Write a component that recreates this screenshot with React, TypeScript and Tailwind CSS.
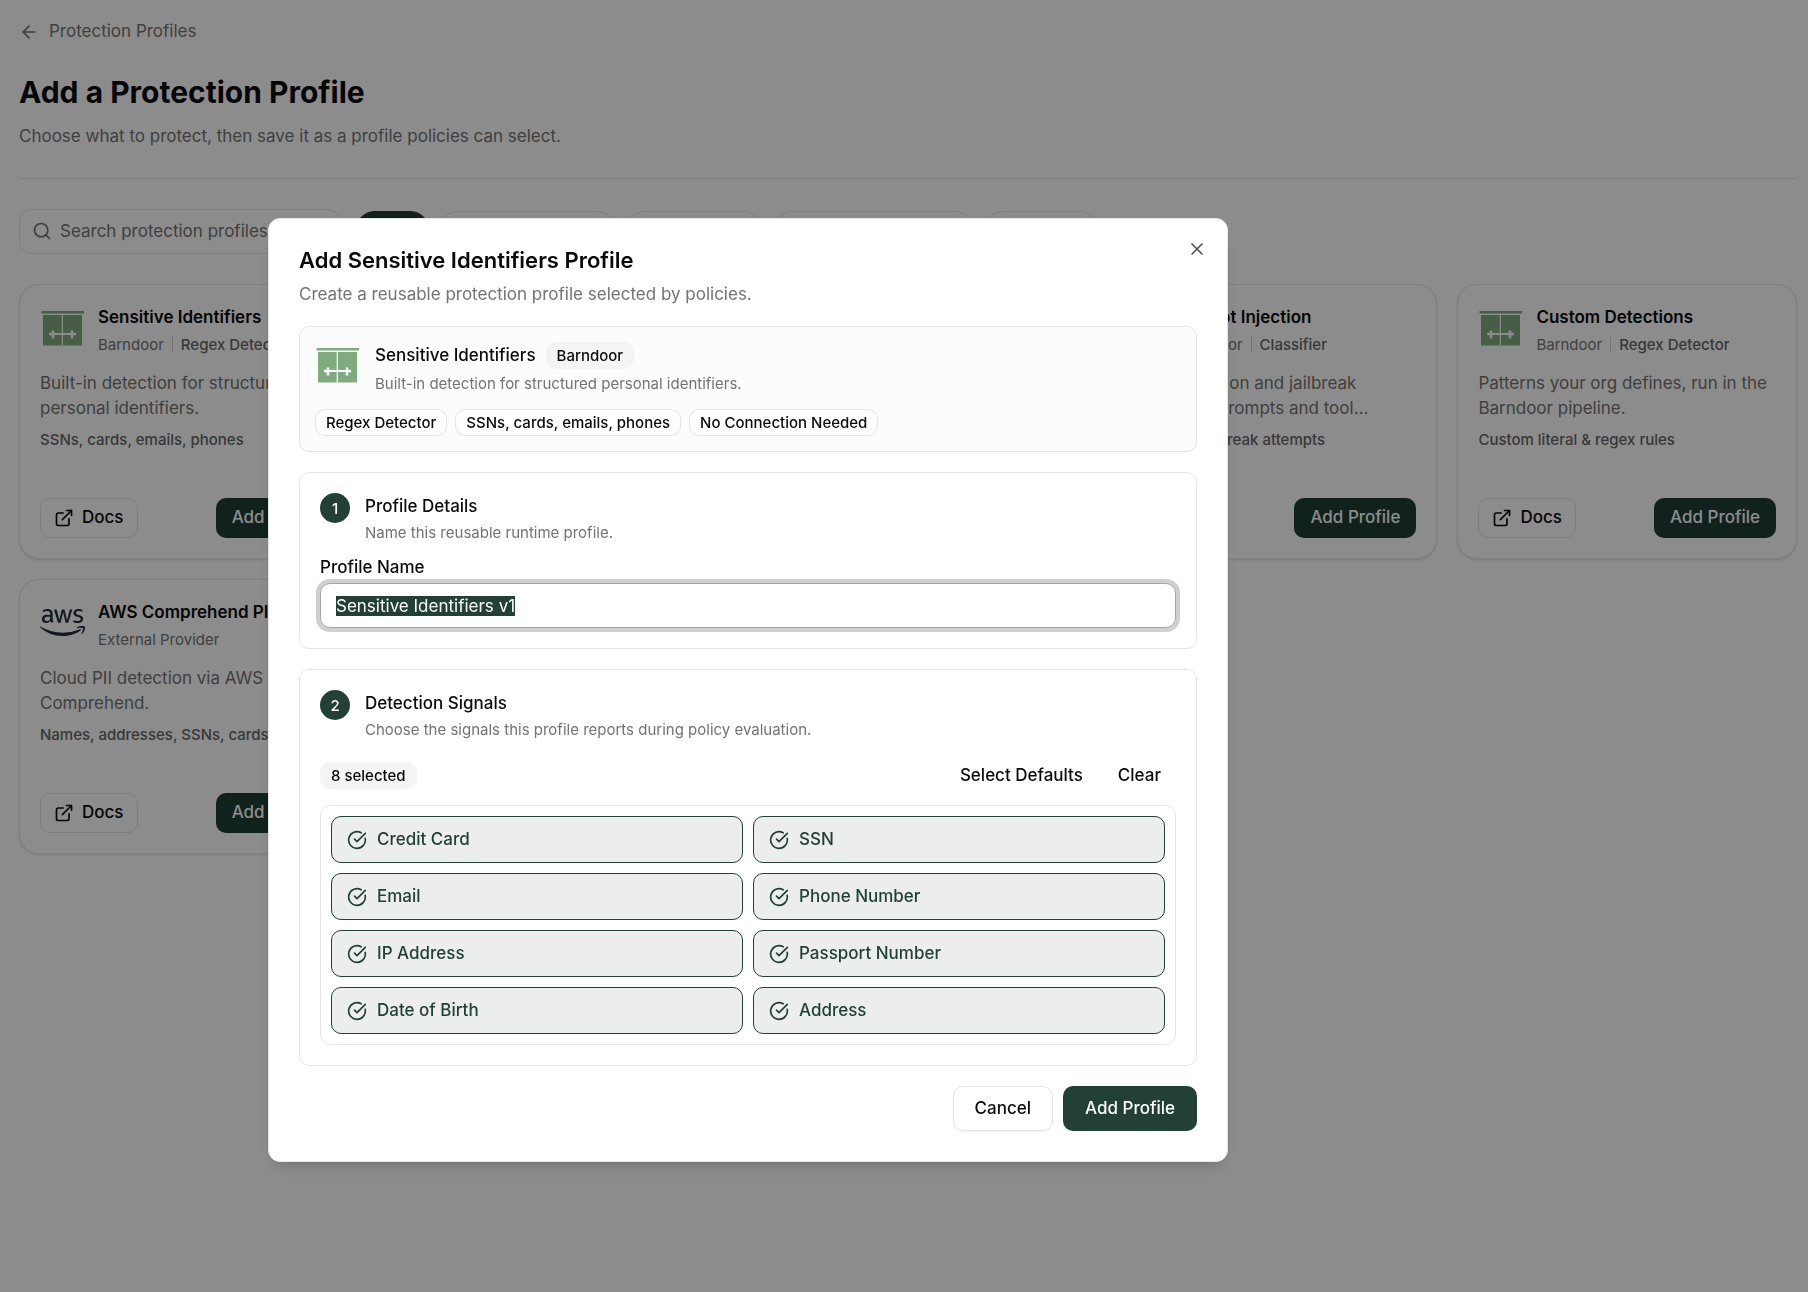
import { ArrowLeft, CircleCheckBig, ExternalLink, Search, X } from 'lucide-react';
import { FaAws } from 'react-icons/fa';

const filters = ['All', 'Regex Detector', 'Classifiers', 'External Providers', 'Custom'];

const signals = [
    'Credit Card', 'SSN',
    'Email', 'Phone Number',
    'IP Address', 'Passport Number',
    'Date of Birth', 'Address',
];

const profiles = [
    {
        title: 'Sensitive Identifiers',
        vendor: 'Barndoor',
        kind: 'Regex Detector',
        desc: 'Built-in detection for structured personal identifiers.',
        covers: 'SSNs, cards, emails, phones',
    },
    {
        title: 'Secrets',
        vendor: 'Barndoor',
        kind: 'Regex Detector',
        desc: 'Finds keys and tokens in prompts and tool calls.',
        covers: 'API keys, tokens',
    },
    {
        title: 'Toxicity',
        vendor: 'Barndoor',
        kind: 'Classifier',
        desc: 'Flags harmful language in prompts.',
        covers: 'Hate, harassment',
    },
    {
        title: 'Prompt Injection',
        vendor: 'Barndoor',
        kind: 'Classifier',
        desc: 'Prompt injection and jailbreak detection in prompts and tool responses.',
        covers: 'Injection & jailbreak attempts',
    },
    {
        title: 'Custom Detections',
        vendor: 'Barndoor',
        kind: 'Regex Detector',
        desc: 'Patterns your org defines, run in the Barndoor pipeline.',
        covers: 'Custom literal & regex rules',
    },
    {
        title: 'AWS Comprehend PII',
        vendor: 'External Provider',
        desc: 'Cloud PII detection via AWS Comprehend.',
        covers: 'Names, addresses, SSNs, cards',
    },
];

export default function App() {
    return (
        <div className="min-h-screen bg-white font-['Inter',sans-serif] text-[17px] leading-[25px] text-[#0a0a0a]">
            <main className="pt-[19px] pr-[11px] pl-[19px]">
                <a href="#profiles" className="inline-flex items-center gap-[10px] text-[#737373]">
                    <ArrowLeft size={20} />
                    Protection Profiles
                </a>
                <h1 className="mt-6 text-[30px] leading-[38px] font-bold">Add a Protection Profile</h1>
                <p className="mt-[13px] text-[#737373]">Choose what to protect, then save it as a profile policies can select.</p>

                <div className="mt-[29px] flex items-center gap-[15px] border-t border-[#e5e5e5] pt-[30px]">
                    <label className="flex h-[45px] w-[321px] items-center gap-2 rounded-xl border border-[#e5e5e5] px-3 text-[#737373]">
                        <Search size={20} className="shrink-0" />
                        <input
                            type="search"
                            aria-label="Search protection profiles"
                            placeholder="Search protection profiles..."
                            className="w-full min-w-0 bg-transparent outline-none placeholder:text-[#737373]"
                        />
                    </label>
                    <div className="flex gap-2">
                        {filters.map((name, i) => (
                            <button
                                key={name}
                                className={`h-10 rounded-full border px-[26px] font-medium ${i === 0 ? 'border-[#1f3d33] bg-[#1f3d33] text-white' : 'border-[#e5e5e5]'}`}
                            >
                                {name}
                            </button>
                        ))}
                    </div>
                </div>

                <div className="mt-[30px] grid grid-cols-5 gap-5">
                    {profiles.map((profile) => (
                        <ProfileCard key={profile.title} {...profile} />
                    ))}
                </div>
            </main>

            <div className="fixed inset-0 flex items-start bg-black/45 pt-[218px] pl-[268px]">
                <AddProfileDialog />
            </div>
        </div>
    );
}

const AddProfileDialog = () => (
    <div role="dialog" aria-labelledby="dialog-title" className="relative w-full max-w-[960px] rounded-xl border border-[#e5e5e5] bg-white px-[30px] pt-[29px] pb-[30px] shadow-lg">
        <button aria-label="Close" className="absolute top-5 right-5 text-[#525252]">
            <X size={20} />
        </button>

        <h2 id="dialog-title" className="text-[22px] leading-[25px] font-semibold">Add Sensitive Identifiers Profile</h2>
        <p className="mt-[9px] text-[#737373]">Create a reusable protection profile selected by policies.</p>

        <div className="mt-[19px] rounded-[10px] border border-[#e5e5e5] bg-[#fcfcfc] p-[15px]">
            <div className="flex gap-[15px]">
                <BarnLogo />
                <div>
                    <div className="flex items-center gap-[10px]">
                        <span className="font-medium">Sensitive Identifiers</span>
                        <Badge>Barndoor</Badge>
                    </div>
                    <p className="mt-[5px] text-[15px] leading-5 text-[#737373]">Built-in detection for structured personal identifiers.</p>
                </div>
            </div>
            <div className="mt-[15px] flex gap-2">
                <Tag>Regex Detector</Tag>
                <Tag>SSNs, cards, emails, phones</Tag>
                <Tag>No Connection Needed</Tag>
            </div>
        </div>

        <section className="mt-5 rounded-[10px] border border-[#e5e5e5] p-5">
            <StepHeader num={1} title="Profile Details" desc="Name this reusable runtime profile." />
            <label htmlFor="profile-name" className="mt-3 block font-medium">Profile Name</label>
            <input
                id="profile-name"
                type="text"
                defaultValue="Sensitive Identifiers v1"
                autoFocus
                onFocus={(e) => e.target.select()}
                className="mt-[3px] h-[45px] w-full rounded-[10px] border border-[#a3a3a3] px-[15px] ring-4 ring-[#cfcfcf] outline-none selection:bg-[#234036] selection:text-white"
            />
        </section>

        <section className="mt-5 rounded-[10px] border border-[#e5e5e5] p-5">
            <StepHeader num={2} title="Detection Signals" desc="Choose the signals this profile reports during policy evaluation." />
            <div className="mt-[15px] flex items-center justify-between">
                <Badge>8 selected</Badge>
                <div className="flex gap-[5px]">
                    <button className="h-10 px-[15px] font-medium">Select Defaults</button>
                    <button className="h-10 px-[15px] font-medium">Clear</button>
                </div>
            </div>
            <div className="mt-[10px] grid grid-cols-2 gap-[10px] rounded-[10px] border border-[#e5e5e5] p-[10px]">
                {signals.map((signal) => (
                    <button
                        key={signal}
                        aria-pressed="true"
                        className="flex h-[47px] items-center gap-[10px] rounded-[10px] border border-[#234036] bg-[#ebeeec] px-[15px] font-medium text-[#234036]"
                    >
                        <CircleCheckBig size={20} />
                        {signal}
                    </button>
                ))}
            </div>
        </section>

        <div className="mt-5 flex justify-end gap-[10px]">
            <button className="h-[45px] rounded-[10px] border border-[#e5e5e5] px-[21px] font-medium shadow-xs">Cancel</button>
            <button className="h-[45px] rounded-[10px] bg-[#234036] px-[22px] font-medium text-white">Add Profile</button>
        </div>
    </div>
);

interface ProfileCardProps {
    title: string;
    vendor: string;
    kind?: string;
    desc: string;
    covers: string;
}

const ProfileCard = ({ title, vendor, kind, desc, covers }: ProfileCardProps) => (
    <article className="flex h-[275px] flex-col rounded-[20px] border border-[#e5e5e5] bg-white p-5 shadow-sm">
        <div className="flex gap-[13px]">
            {kind ? <BarnLogo /> : <FaAws size={45} className="shrink-0 text-[#232f3e]" />}
            <div className="min-w-0">
                <h3 className="truncate font-semibold">{title}</h3>
                <div className="mt-[5px] flex items-center gap-2 text-[15px] leading-5 text-[#737373]">
                    <span>{vendor}</span>
                    {kind && (
                        <>
                            <span className="h-[15px] w-px bg-[#d4d4d4]" />
                            <span className="font-medium text-[#666]">{kind}</span>
                        </>
                    )}
                </div>
            </div>
        </div>
        <p className="mt-4 line-clamp-2 text-[#737373]">{desc}</p>
        <p className="mt-[9px] truncate text-[15px] leading-5 font-medium text-[#666]">{covers}</p>
        <div className="mt-auto flex justify-between">
            <button className="flex h-10 items-center gap-2 rounded-[10px] border border-[#e5e5e5] px-[13px] font-medium">
                <ExternalLink size={20} />
                Docs
            </button>
            <button className="h-10 rounded-[10px] bg-[#1f3d33] px-4 font-medium text-white">Add Profile</button>
        </div>
    </article>
);

const StepHeader = ({ num, title, desc }: { num: number, title: string, desc: string }) => (
    <div className="flex gap-[15px]">
        <span className="flex size-[30px] shrink-0 items-center justify-center rounded-full bg-[#234036] text-[15px] font-medium text-white">{num}</span>
        <div className="pt-px">
            <h3 className="font-medium">{title}</h3>
            <p className="mt-[4px] text-[15px] leading-5 text-[#737373]">{desc}</p>
        </div>
    </div>
);

const Badge = ({ children }: { children: string }) => (
    <span className="rounded-[10px] bg-[#f4f4f4] px-[11px] text-[15px] leading-[27px] font-medium">{children}</span>
);

const Tag = ({ children }: { children: string }) => (
    <span className="rounded-[10px] border border-[#e5e5e5] bg-white px-[10px] text-[15px] leading-[25px] font-medium">{children}</span>
);

const BarnLogo = () => (
    <svg width="45" height="45" viewBox="0 0 45 45" className="shrink-0">
        <path d="M1.500 6h42.500v2.500H1.500z M3 10H42v30.500H3z" fill="#80ab7e" />
        <path d="M22.300 10v30.500" stroke="#fff" strokeWidth="1.200" />
        <path d="M9.500 29h26.200" stroke="#fff" strokeWidth="2" />
        <path d="M13 25.500v8 M32 25.500v8" stroke="#fff" strokeWidth="2.500" />
        <circle cx="10.500" cy="29" r="1.600" fill="#fff" />
        <circle cx="34.500" cy="29" r="1.600" fill="#fff" />
    </svg>
);
